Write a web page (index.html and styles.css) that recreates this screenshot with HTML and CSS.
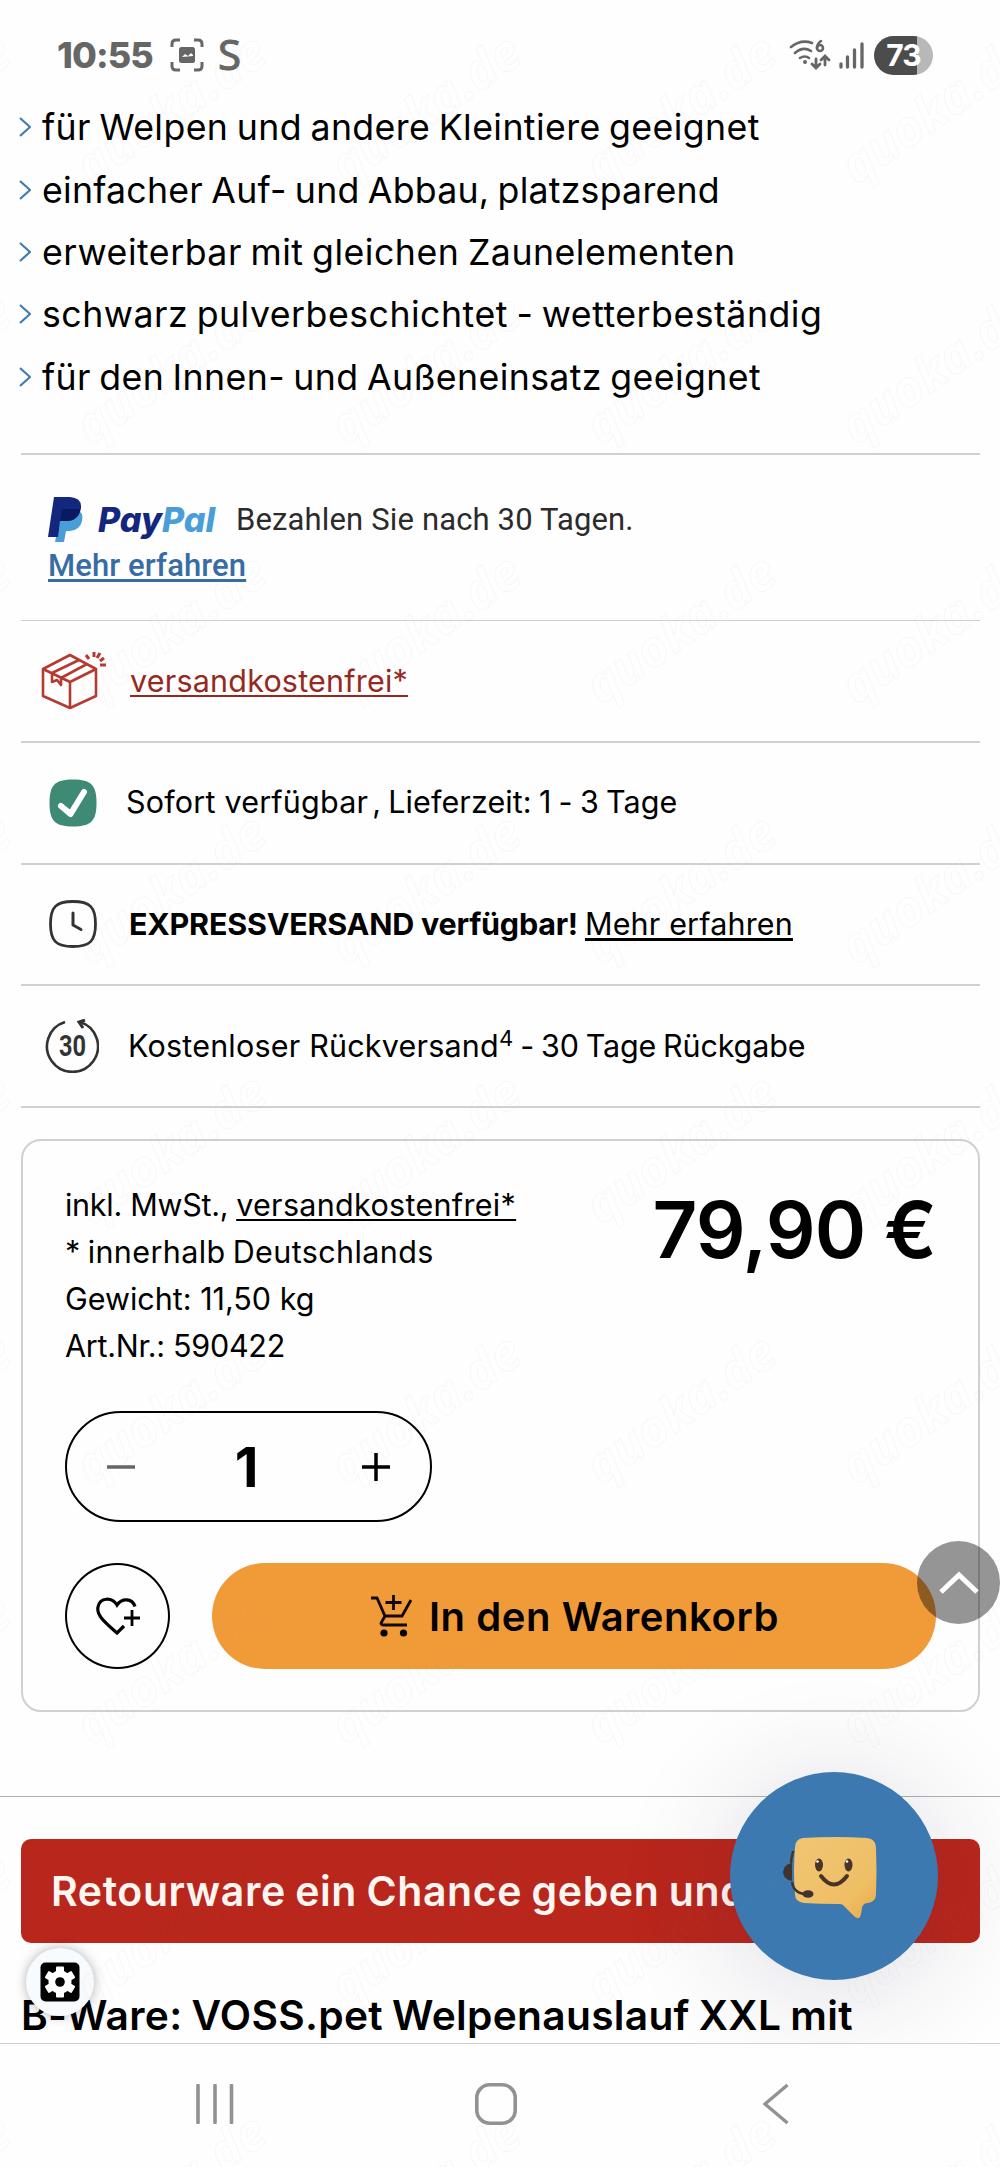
FILE: index.html
```html
<!DOCTYPE html>
<html lang="de">
<head>
<meta charset="utf-8">
<title>VOSS.pet Welpenauslauf</title>
<link rel="stylesheet" href="styles.css">
</head>
<body>
<div class="screen">
  <header class="status">
    <span class="clock">10:55</span>
    <svg class="shot" width="34" height="34" viewBox="0 0 34 34"><path d="M2 9V6q0-4 4-4h4M24 2h4q4 0 4 4v3M2 24v4q0 4 4 4h4M24 32h4q4 0 4-4v-4" fill="none" stroke="#666" stroke-width="3"/><rect x="9" y="9" width="16" height="16" rx="2.5" fill="#666"/><path d="M12 19l3-3 3 2 3-3 2 2v1z" fill="#fefefe"/></svg>
    <span class="s-mark">S</span>
    <span class="spacer"></span>
    <svg class="wifi" width="42" height="32" viewBox="0 0 42 32"><g fill="none" stroke="#666" stroke-width="2.6" stroke-linecap="round"><path d="M2 8Q12 0 23 4M6 14q8-7 16-2M11 19q5-3 9 0"/><path d="M27 20v8M23 25l4 4 4-4M36 26v-8M32 21l4-4 4 4" stroke-width="2.8"/><path d="M32 2q-4 3-4 7"/><circle cx="31" cy="9" r="3"/></g><circle cx="16" cy="23" r="2" fill="#666"/></svg>
    <svg class="bars" width="26" height="28" viewBox="0 0 26 28"><path d="M3 23v3M9.500 16v10M16.500 9v17M24 3v23" stroke="#666" stroke-width="3.300" stroke-linecap="round"/></svg>
    <span class="battery">73</span>
  </header>

  <ul class="features">
    <li><svg class="chev" viewBox="0 0 12 20"><path d="M1 1l10 9L1 19"/></svg><span class="f1">für Welpen und andere Kleintiere geeignet</span></li>
    <li><svg class="chev" viewBox="0 0 12 20"><path d="M1 1l10 9L1 19"/></svg><span class="f2">einfacher Auf- und Abbau, platzsparend</span></li>
    <li><svg class="chev" viewBox="0 0 12 20"><path d="M1 1l10 9L1 19"/></svg><span class="f3">erweiterbar mit gleichen Zaunelementen</span></li>
    <li><svg class="chev" viewBox="0 0 12 20"><path d="M1 1l10 9L1 19"/></svg><span class="f4">schwarz pulverbeschichtet - wetterbeständig</span></li>
    <li><svg class="chev" viewBox="0 0 12 20"><path d="M1 1l10 9L1 19"/></svg><span class="f5">für den Innen- und Außeneinsatz geeignet</span></li>
  </ul>

  <section class="paypal">
    <div class="pp-line">
      <svg class="pp-mark" width="36" height="46" viewBox="0 0 36 46"><path d="M14 12h14q8 3 6 12-2 9-12 10h-4l-2 11H7z" fill="#4a9ed8"/><path d="M6 0h16q12 1 11 11-2 13-15 13h-6L10 40H0z" fill="#14277f"/><path d="M14 12h17q1 0 1 2-3 10-14 10h-6z" fill="#0b1a60"/></svg>
      <span class="pp-word"><span class="pp-dark">Pay</span><span class="pp-light">Pal</span></span>
      <span class="pp-text">Bezahlen Sie nach 30 Tagen.</span>
    </div>
    <div><a class="pp-link">Mehr erfahren</a></div>
  </section>

  <section class="facts">
    <div class="fact">
      <svg class="ico box" width="66" height="60" viewBox="0 0 66 60"><g fill="none" stroke="#b73a31" stroke-width="2.600" stroke-linejoin="round"><path d="M2 18L29 4l26 14v27L29 57 2 45z"/><path d="M2 18l27 13 26-13M29 31v26M11 22L38 9M20 27L46 13M11 22v9l5-2 4 5v-7"/></g><path d="M45 4l3 4M53 1v5M59 2l-3 5M63 7l-4 3M65 14h-6" stroke="#b73a31" stroke-width="3"/></svg>
      <a class="t1 red">versandkostenfrei*</a>
    </div>
    <div class="fact">
      <svg class="ico" width="48" height="48" viewBox="0 0 48 48"><path d="M24 .5C42 .5 47.500 6 47.500 24S42 47.500 24 47.500 .5 42 .5 24 6 .5 24 .5z" fill="#3f8a74"/><path d="M12 27l9.500 8L35 13" fill="none" stroke="#fff" stroke-width="6" stroke-linecap="round" stroke-linejoin="round"/></svg>
      <span class="t2"><span class="t2a">Sofort verfügbar</span><span class="t2b">, Lieferzeit: 1 - 3 Tage</span></span>
    </div>
    <div class="fact">
      <svg class="ico" width="48" height="48" viewBox="0 0 48 48"><path d="M24 1.500C41 1.500 46.500 7 46.500 24S41 46.500 24 46.500 1.500 41 1.500 24 7 1.500 24 1.500z" fill="none" stroke="#333" stroke-width="2.800"/><path d="M24 13v12l8 4.500" fill="none" stroke="#333" stroke-width="3" stroke-linecap="round" stroke-linejoin="round"/></svg>
      <span class="t3"><b class="t3a">EXPRESSVERSAND verfügbar!</b><a class="t3b">Mehr erfahren</a></span>
    </div>
    <div class="fact">
      <svg class="ico ret" width="54" height="54" viewBox="0 0 54 54"><path d="M20 3A25.500 25.500 0 1 0 35 3" fill="none" stroke="#333" stroke-width="2.600"/><path d="M40 1l-6 2 4 6" fill="none" stroke="#333" stroke-width="3"/><text x="27.500" y="37" class="ret-num" text-anchor="middle" textLength="27" lengthAdjust="spacingAndGlyphs">30</text></svg>
      <span class="t4"><span class="t4a">Kostenloser Rückversand</span><span class="sup">4</span><span class="t4b">- 30 Tage Rückgabe</span></span>
    </div>
  </section>

  <section class="card">
    <div class="card-top">
      <div class="meta">
        <div><span class="m1">inkl. MwSt.,</span><a class="m1b">versandkostenfrei*</a></div>
        <div><span class="m2">* innerhalb Deutschlands</span></div>
        <div><span class="m3">Gewicht: 11,50 kg</span></div>
        <div><span class="m4">Art.Nr.: 590422</span></div>
      </div>
      <div class="price">79,90 €</div>
    </div>
    <div class="qty">
      <svg width="28" height="28" viewBox="0 0 28 28"><path d="M0 14h28" stroke="#666" stroke-width="3.500"/></svg>
      <span class="one">1</span>
      <svg width="28" height="28" viewBox="0 0 28 28"><path d="M0 14h28M14 0v28" stroke="#000" stroke-width="3.500"/></svg>
    </div>
    <div class="buy">
      <div class="heart"><svg width="46" height="38" viewBox="0 0 46 38"><path d="M40 9.500C37 1 27 1 22 8 17 0 5 0 3 10c-2 9 9 17 19 26l7-7" fill="none" stroke="#000" stroke-width="3.200"/><path d="M29 21h16M37 13v16" stroke="#000" stroke-width="2.800"/></svg></div>
      <div class="cart">
        <svg width="42" height="42" viewBox="0 0 42 42"><path d="M0 3h6l8 18h17l9-16M14 21l-4 7q0 2 3 2h23M14.500 7.500h16M22.500 0v15" fill="none" stroke="#100800" stroke-width="2.800"/><circle cx="13" cy="38" r="3.600"/><circle cx="32.500" cy="38" r="3.600"/></svg>
        <span class="cart-text">In den Warenkorb</span>
      </div>
    </div>
    <div class="totop"><svg width="40" height="24" viewBox="0 0 40 24"><path d="M2 21L20 4l18 17" fill="none" stroke="#fff" stroke-width="5"/></svg></div>
  </section>

  <section class="more">
    <div class="banner"><span class="banner-text">Retourware ein Chance geben und</span></div>
    <div class="product"><span class="product-text">B-Ware: VOSS.pet Welpenauslauf XXL mit</span></div>
    <div class="settings"><svg width="40" height="40" viewBox="-20 -20 40 40"><rect x="-19.500" y="-19.500" width="39" height="39" rx="5"/><g fill="#fff"><circle r="11.500"/><rect x="-4" y="-15.500" width="8" height="31" rx="1"/><rect x="-4" y="-15.500" width="8" height="31" rx="1" transform="rotate(60)"/><rect x="-4" y="-15.500" width="8" height="31" rx="1" transform="rotate(120)"/></g><circle r="4.800"/></svg></div>
    <div class="chat">
      <svg width="94" height="84" viewBox="0 0 94 84"><defs><linearGradient id="bub" x1="0" y1="0" x2="1" y2="1"><stop offset="0" stop-color="#f0c573"/><stop offset=".7" stop-color="#efbf66"/><stop offset="1" stop-color="#e9a948"/></linearGradient></defs><path d="M20 2Q52 0 84 2q9 1 9 10 1 24 0 46 0 8-8 9-5 0-6 5-1 9-3 10-3 1-6-3l-10-10q-1-1-4-1-19 0-35-1-9-1-9-9-2-24 0-46 0-9 8-10z" fill="url(#bub)"/><path d="M8 27c0-6 2-9 2-12M9 46q2 13 17 12" fill="none" stroke="#41342f" stroke-width="2.400"/><path d="M9 27v18q-8-1-9-9 1-8 9-9z" fill="#41342f"/><ellipse cx="25" cy="58" rx="5.500" ry="3.800" fill="#41342f"/><ellipse cx="36" cy="29" rx="4" ry="6.500" fill="#4a3327"/><ellipse cx="65.500" cy="29" rx="4" ry="6.500" fill="#4a3327"/><circle cx="34.500" cy="25.500" r="1.300" fill="#fff"/><circle cx="64" cy="25.500" r="1.300" fill="#fff"/><path d="M38 40q13 17 26 0" fill="none" stroke="#4a3327" stroke-width="4" stroke-linecap="round"/></svg>
    </div>
  </section>

  <footer class="nav">
    <svg width="38" height="40" viewBox="0 0 38 40"><path d="M2 1.500v37M19 1.500v37M35.500 1.500v37" stroke="#929292" stroke-width="3.600" stroke-linecap="round"/></svg>
    <svg width="42" height="42" viewBox="0 0 42 42"><rect x="1.800" y="1.800" width="38.400" height="38.400" rx="13" fill="none" stroke="#929292" stroke-width="3.600"/></svg>
    <svg width="26" height="42" viewBox="0 0 26 42"><path d="M24.500 2L2 21l22.500 19" fill="none" stroke="#929292" stroke-width="3.400"/></svg>
  </footer>

  <svg class="watermark" width="1000" height="2167" aria-hidden="true"><defs><pattern id="wm" width="255" height="260" patternUnits="userSpaceOnUse" x="61" y="-50"><text class="wm-text" transform="translate(30 236) rotate(-35)">quoka.de</text></pattern></defs><rect width="1000" height="2167" fill="url(#wm)"/></svg>
</div>
</body>
</html>
```
FILE: styles.css
```css
* { box-sizing: border-box; }
body { margin: 0; background: #fefefe; }
.screen {
  position: relative;
  width: 1000px;
  height: 2167px;
  overflow: hidden;
  display: flex;
  flex-direction: column;
  background: #fefefe;
  color: #000;
  font-family: Inter, "Noto Sans", sans-serif;
  font-size: 30.5px;
  white-space: nowrap;
}
svg { display: block; flex: none; }

.status { height: 96px; padding: 14px 67px 0 57px; display: flex; align-items: center; color: #666; flex: none; }
.clock { font-size: 36px; font-weight: 800; letter-spacing: -0.9px; }
.shot { margin-left: 17px; }
.s-mark { margin-left: 14px; font: 42px/44px "Noto Sans", sans-serif; -webkit-text-stroke: 1px #666; position: relative; top: -1px; }
.spacer { flex: 1; }
.bars { margin-left: 7px; }
.battery {
  margin-left: 10px; width: 59px; height: 39px; border-radius: 20px;
  background: linear-gradient(90deg, #4c4c4c 43px, #b8b8b8 43px);
  color: #fff; font-size: 30px; font-weight: 700; line-height: 39px; text-align: center; letter-spacing: -1px;
}

.features { list-style: none; margin: 0; padding: 0 0 0 19px; height: 357px; flex: none; font-size: 35.7px; word-spacing: -2px; }
.features li { height: 62.4px; display: flex; align-items: center; }
.chev { width: 12px; height: 20px; margin-right: 11px; fill: none; stroke: #3f7cb0; stroke-width: 2.2; }
.f1 { letter-spacing: .4px; }
.f2 { letter-spacing: .23px; }
.f3 { letter-spacing: .5px; }
.f4 { letter-spacing: .49px; }
.f5 { letter-spacing: .38px; }

.paypal { height: 168px; margin: 0 20px 0 21px; padding: 42px 0 0 27px; border-top: 2px solid #d0d0d0; border-bottom: 1px solid #d0d0d0; flex: none; font: 31px/45.5px Roboto, sans-serif; color: #2b2b2b; }
.pp-line { display: flex; align-items: center; height: 45.5px; }
.pp-word { width: 121px; margin: 0 17px 0 14px; font: italic 800 34px/45px Inter, sans-serif; }
.pp-text { letter-spacing: .15px; }
.pp-dark { color: #14277f; }
.pp-light { color: #4a9ed8; }
.pp-link { color: #386ca4; font-weight: 500; letter-spacing: .1px; text-decoration: underline; text-decoration-thickness: 3px; text-underline-offset: 3px; }

.facts { margin: 0 20px 0 21px; flex: none; }
.fact { height: 121.75px; border-bottom: 2px solid #d0d0d0; padding-left: 28px; display: flex; align-items: center; }
.fact a, .meta a { text-decoration: underline; text-decoration-thickness: 2px; text-underline-offset: 3px; }
.fact a.t3b { text-decoration-thickness: 3px; }
.red { color: #96291f; }
.ico { margin-right: 32px; }
.ico.box { margin: 0 23px 0 -8px; }
.ico.ret { margin: 0 29px 0 -4px; }
.ret-num { font: 700 29px Roboto, sans-serif; fill: #333; }
.t1 { letter-spacing: .2px; }
.t2 { margin: -3px 0 0 -3px; }
.t2a { letter-spacing: .2px; }
.t2b { margin-left: 4px; letter-spacing: .1px; word-spacing: -1.5px; }
.t3 { margin-top: -2px; }
.t3a { letter-spacing: -.23px; }
.t3b { margin-left: 7px; letter-spacing: .16px; }
.t4 { margin-top: -2px; }
.t4a { letter-spacing: .2px; }
.t4b { letter-spacing: -.15px; word-spacing: -1.5px; }
.sup { font-size: 22px; position: relative; top: -11px; margin-right: 7px; }

.card { position: relative; margin: 31px 20px 0 21px; height: 573px; border: 2px solid #d0d0d0; border-radius: 20px; padding: 40px 42px 0; flex: none; }
.card-top { display: flex; justify-content: space-between; height: 230px; }
.meta { line-height: 47px; }
.m1 { letter-spacing: -.28px; }
.m1b { margin-left: 8px; letter-spacing: .31px; }
.m2 { letter-spacing: .4px; word-spacing: -2px; }
.m4 { letter-spacing: -.27px; }
.price { font-size: 78px; font-weight: 600; line-height: 98px; letter-spacing: -.9px; }
.qty { width: 367px; height: 111px; border: 2px solid #000; border-radius: 56px; display: flex; align-items: center; justify-content: space-between; padding: 0 40px; }
.one { font-size: 55px; font-weight: 700; padding-right: 4px; }
.buy { display: flex; margin-top: 41px; gap: 42px; }
.heart { width: 105px; height: 106px; border: 2px solid #000; border-radius: 50%; display: flex; align-items: center; justify-content: center; }
.cart { width: 724px; height: 106px; border-radius: 53px; background: #f09b38; display: flex; align-items: center; padding-left: 159px; gap: 16px; font-size: 40px; font-weight: 600; letter-spacing: .55px; }
.totop { position: absolute; left: 894px; top: 400px; width: 83px; height: 83px; border-radius: 50%; background: rgba(0,0,0,.41); display: flex; align-items: center; justify-content: center; }

.more { position: relative; margin-top: 84px; border-top: 1px solid #b0b0b0; height: 247px; flex: none; padding: 42px 20px 0 21px; overflow: visible; }
.banner { height: 104px; border-radius: 10px; background: #b9261b; color: #fff6f2; padding-left: 30px; font-size: 41px; font-weight: 600; line-height: 104px; letter-spacing: .6px; word-spacing: -1.5px; overflow: hidden; }
.product { margin-top: 48px; font-size: 40.7px; font-weight: 600; line-height: 50px; letter-spacing: .3px; word-spacing: -1.5px; }
.settings { position: absolute; left: 26px; top: 151px; width: 68px; height: 68px; border-radius: 50%; background: #f7fbfe; box-shadow: 0 0 12px rgba(0,0,0,.3); display: flex; align-items: center; justify-content: center; }
.chat { position: absolute; left: 730px; top: -25px; width: 208px; height: 208px; border-radius: 50%; background: #3d79b1; box-shadow: 0 10px 120px rgba(40,40,80,.16); padding: 64px 0 0 53px; }

.nav { position: relative; flex: 1; border-top: 1px solid #d0d0d0; background: #fefefe; padding: 0 211px 3px 196px; display: grid; grid-template-columns: 279px 288px 26px; align-items: center; }

.watermark { position: absolute; left: 0; top: 0; pointer-events: none; }
.wm-text { font: italic 700 50px "Open Sans", sans-serif; fill: none; stroke: rgba(120,110,110,.05); stroke-width: 1; }
```
